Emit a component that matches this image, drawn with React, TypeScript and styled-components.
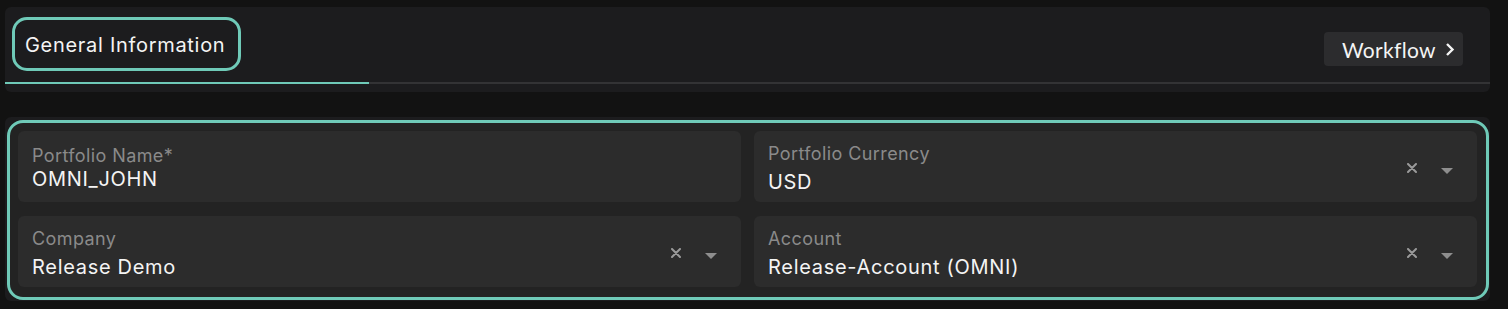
import React from 'react'
import styled, { createGlobalStyle } from 'styled-components'

const GlobalStyle = createGlobalStyle`
  body {
    margin: 0;
    background: #121212;
    font-family: Inter, 'Noto Sans', sans-serif;
    color: #f2f2f2;
  }
`

const Page = styled.div`
  padding: 7px 18px 8px 5px;
  display: flex;
  flex-direction: column;
  gap: 25px;
`

const Card = styled.div`
  background: #1c1c1e;
  border-radius: 6px;
`

const HeaderCard = styled(Card)`
  display: flex;
  padding-bottom: 8px;
`

const ActiveTab = styled.div`
  box-sizing: border-box;
  width: 364px;
  padding: 10px 0 11px 7px;
  border-bottom: 2px solid #6fcab8;
`

const TabPill = styled.div`
  box-sizing: border-box;
  display: inline-flex;
  align-items: center;
  height: 54px;
  padding: 2px 13px 0 10px;
  border: 3px solid #6fcab8;
  border-radius: 15px;
  font-size: 20px;
  letter-spacing: 0.7px;
  color: #f4f4f4;
`

const TabRest = styled.div`
  flex: 1;
  display: flex;
  justify-content: flex-end;
  align-items: flex-start;
  padding: 25px 27px 0 0;
  border-bottom: 2px solid #333335;
`

const WorkflowButton = styled.button`
  display: flex;
  align-items: center;
  gap: 9px;
  height: 34px;
  width: 139px;
  padding: 0 0 0 18px;
  border: none;
  border-radius: 4px;
  background: #2c2c2e;
  color: #f4f4f4;
  font-family: Lato, 'Noto Sans', sans-serif;
  font-size: 21px;
  letter-spacing: 0.3px;
`

const FormCard = styled(Card)`
  padding: 3px 1px 1px 2px;
`

const Highlight = styled.div`
  display: grid;
  grid-template-columns: 1fr 1fr;
  gap: 14px 13px;
  padding: 8px 9px 10px 8px;
  border: 3px solid #6fcab8;
  border-radius: 16px;
  background: #232323;
`

const Field = styled.div<{ $select?: boolean }>`
  height: 71px;
  box-sizing: border-box;
  display: flex;
  align-items: flex-start;
  padding: ${(p) => (p.$select ? '12px 24px 0 14px' : '14px 24px 0 14px')};
  background: #2c2c2c;
  border-radius: 6px;
`

const FieldText = styled.div<{ $select?: boolean }>`
  flex: 1;
  display: flex;
  flex-direction: column;
  gap: ${(p) => (p.$select ? '5px' : '0px')};
`

const Label = styled.span`
  font-size: 18px;
  line-height: 22px;
  letter-spacing: 0.4px;
  color: #8a8a8a;
`

const Value = styled.span`
  font-size: 20px;
  line-height: 24px;
  letter-spacing: 0.7px;
  color: #f4f4f4;
`

const Controls = styled.div`
  display: flex;
  align-items: flex-start;
  gap: 24px;
  margin-top: 20px;
`

const ClearIcon = () => (
  <svg width="10" height="10" viewBox="0 0 10 10">
    <path d="M1 1 L9 9 M9 1 L1 9" stroke="#9a9a9a" strokeWidth="2" strokeLinecap="round" />
  </svg>
)

const Caret = () => (
  <svg width="12" height="6" viewBox="0 0 12 6" style={{ marginTop: 5 }}>
    <path d="M0 0 H12 L6 6 Z" fill="#8e8e8e" />
  </svg>
)

const Chevron = () => (
  <svg width="10" height="15" viewBox="0 0 10 15">
    <path d="M2 2 L7.5 7.5 L2 13" stroke="#f4f4f4" strokeWidth="2.4" fill="none" />
  </svg>
)

type FieldProps = { label: string; value: string; select?: boolean }

const FormField: React.FC<FieldProps> = ({ label, value, select }) => (
  <Field $select={select}>
    <FieldText $select={select}>
      <Label>{label}</Label>
      <Value>{value}</Value>
    </FieldText>
    {select && (
      <Controls>
        <ClearIcon />
        <Caret />
      </Controls>
    )}
  </Field>
)

const App: React.FC = () => (
  <>
    <GlobalStyle />
    <Page>
      <HeaderCard>
        <ActiveTab>
          <TabPill>General Information</TabPill>
        </ActiveTab>
        <TabRest>
          <WorkflowButton>
            Workflow
            <Chevron />
          </WorkflowButton>
        </TabRest>
      </HeaderCard>
      <FormCard>
        <Highlight>
          <FormField label="Portfolio Name*" value="OMNI_JOHN" />
          <FormField label="Portfolio Currency" value="USD" select />
          <FormField label="Company" value="Release Demo" select />
          <FormField label="Account" value="Release-Account (OMNI)" select />
        </Highlight>
      </FormCard>
    </Page>
  </>
)

export default App
